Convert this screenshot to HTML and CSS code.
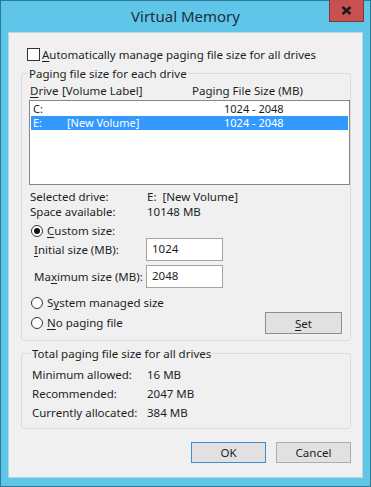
FILE: index.html
```html
<!DOCTYPE html>
<html lang="en">
<head>
    <meta charset="UTF-8">
    <title>Virtual Memory</title>
    <link rel="stylesheet" href="styles.css">
</head>
<body>
    <div class="window">
        <div class="titlebar">
            <span></span>
            <span class="title">Virtual Memory</span>
            <button class="close-btn" aria-label="Close">
                <svg width="11" height="9" viewBox="0 0 11 9">
                    <path d="M1.5 1 L9.5 8 M9.5 1 L1.5 8" stroke="#1b1b1b" stroke-width="2.4" fill="none"/>
                </svg>
            </button>
        </div>

        <div class="content">
            <label class="check-row">
                <span class="checkbox"></span>
                <span><u>A</u>utomatically manage paging file size for all drives</span>
            </label>

            <fieldset class="group group-drives">
                <legend>Paging file size for each drive</legend>

                <div class="list-header">
                    <span class="col-drive"><u>D</u>rive</span>
                    <span class="col-label">[Volume Label]</span>
                    <span class="col-size">Paging File Size (MB)</span>
                </div>

                <div class="listbox">
                    <div class="list-row">
                        <span class="cell-drive">C:</span>
                        <span class="cell-label"></span>
                        <span class="cell-size">1024 - 2048</span>
                    </div>
                    <div class="list-row selected">
                        <span class="cell-drive">E:</span>
                        <span class="cell-label">[New Volume]</span>
                        <span class="cell-size">1024 - 2048</span>
                    </div>
                </div>

                <div class="info-row first">
                    <span class="info-label">Selected drive:</span>
                    <span class="info-value">E:&nbsp;&nbsp;[New Volume]</span>
                </div>
                <div class="info-row">
                    <span class="info-label">Space available:</span>
                    <span class="info-value">10148 MB</span>
                </div>

                <label class="radio-row custom">
                    <span class="radio checked"></span>
                    <span><u>C</u>ustom size:</span>
                </label>

                <div class="size-row">
                    <span class="size-label"><u>I</u>nitial size (MB):</span>
                    <span class="textbox">1024</span>
                </div>
                <div class="size-row second">
                    <span class="size-label">Ma<u>x</u>imum size (MB):</span>
                    <span class="textbox">2048</span>
                </div>

                <label class="radio-row system">
                    <span class="radio"></span>
                    <span>S<u>y</u>stem managed size</span>
                </label>

                <div class="set-row">
                    <label class="radio-row">
                        <span class="radio"></span>
                        <span><u>N</u>o paging file</span>
                    </label>
                    <button class="btn btn-set"><u>S</u>et</button>
                </div>
            </fieldset>

            <fieldset class="group group-total">
                <legend>Total paging file size for all drives</legend>
                <div class="total-row">
                    <span class="total-label">Minimum allowed:</span>
                    <span>16 MB</span>
                </div>
                <div class="total-row">
                    <span class="total-label">Recommended:</span>
                    <span>2047 MB</span>
                </div>
                <div class="total-row">
                    <span class="total-label">Currently allocated:</span>
                    <span>384 MB</span>
                </div>
            </fieldset>

            <div class="dialog-buttons">
                <button class="btn btn-default">OK</button>
                <button class="btn">Cancel</button>
            </div>
        </div>
    </div>
</body>
</html>
```

FILE: styles.css
```css
html, body {
    margin: 0;
    padding: 0;
}
body {
    font-family: "Noto Sans", "Open Sans", sans-serif;
    font-size: 11.5px;
    color: #1e1e1e;
}
u {
    text-decoration-thickness: 1px;
    text-underline-offset: 2px;
}
.window {
    width: 371px;
    height: 487px;
    box-sizing: border-box;
    background-color: #5fc6ea;
    border: 1px solid #2b7c99;
    padding: 0 7px 8px 7px;
    display: flex;
    flex-direction: column;
}
.titlebar {
    height: 31px;
    display: grid;
    grid-template-columns: 1fr auto 1fr;
    align-items: start;
}
.title {
    font-size: 15px;
    line-height: 31px;
    color: #1c2f3c;
}
.close-btn {
    justify-self: end;
    width: 35px;
    height: 22px;
    margin-top: -1px;
    margin-right: -1px;
    padding: 0;
    background-color: #c75050;
    border: 1px solid #7d3b3b;
    border-top: none;
    display: flex;
    align-items: center;
    justify-content: center;
}
.content {
    flex: 1;
    background-color: #f0f0f0;
    border: 1px solid #b9d6e2;
    padding: 14px 11px 0 12px;
    display: flex;
    flex-direction: column;
}

/* checkbox + radio */
.check-row {
    display: flex;
    align-items: center;
    height: 15px;
    line-height: 15px;
    margin-left: 6px;
}
.checkbox {
    width: 11px;
    height: 11px;
    border: 1px solid #333;
    background-color: #fff;
    margin-right: 2px;
}
.radio-row {
    display: flex;
    align-items: center;
    height: 14px;
    line-height: 14px;
}
.radio {
    width: 10px;
    height: 10px;
    border: 1px solid #333;
    border-radius: 50%;
    background-color: #fff;
    margin-right: 4px;
    position: relative;
}
.radio.checked::after {
    content: "";
    position: absolute;
    left: 2px;
    top: 2px;
    width: 6px;
    height: 6px;
    border-radius: 50%;
    background-color: #111;
}

/* group boxes */
.group {
    margin: 4px 0 0 0;
    border: 1px solid #dcdcdc;
    border-radius: 3px;
    padding: 0 0 6px 7px;
    min-width: 0;
}
.group legend {
    padding: 0 1px;
    margin-left: -1px;
    line-height: 15px;
}
.list-header {
    display: flex;
    line-height: 15px;
    margin-top: 2px;
    padding-left: 1px;
}
.col-drive { width: 32px; }
.col-label { width: 130px; }
.listbox {
    margin-top: 2px;
    height: 85px;
    box-sizing: border-box;
    border: 1px solid #828790;
    background-color: #fff;
    padding: 1px;
}
.list-row {
    display: flex;
    height: 14px;
    line-height: 14px;
    font-size: 11px;
    padding-left: 2px;
}
.list-row.selected {
    background-color: #3399ff;
    color: #fff;
}
.cell-drive { width: 34px; }
.cell-label { width: 157px; }
.info-row {
    display: flex;
    line-height: 15px;
    padding-left: 1px;
}
.info-row.first {
    margin-top: 4px;
}
.info-label { width: 117px; }
.radio-row.custom {
    margin-top: 5px;
    padding-left: 2px;
}
.size-row {
    display: flex;
    align-items: center;
    margin-top: 0;
    padding-left: 5px;
}
.size-row.second {
    margin-top: 4px;
}
.size-label {
    width: 112px;
}
.textbox {
    width: 77px;
    height: 23px;
    box-sizing: border-box;
    border: 1px solid #a3a3a3;
    background-color: #fff;
    padding: 2px 0 0 5px;
}
.radio-row.system {
    margin-top: 8px;
    padding-left: 2px;
}
.set-row {
    display: flex;
    align-items: center;
    justify-content: space-between;
    margin-top: 2px;
    padding-left: 2px;
    padding-right: 8px;
}

/* buttons */
.btn {
    font-family: inherit;
    font-size: 11.5px;
    color: #1e1e1e;
    width: 75px;
    height: 21px;
    padding: 0;
    background-color: #e1e1e1;
    border: 1px solid #adadad;
}
.btn-set {
    width: 77px;
    height: 22px;
    border-color: #8e8e8e;
}
.btn-default {
    border-color: #3c8fd6;
}
.group-total {
    margin-top: 5px;
    padding: 0 0 6px 10px;
}
.total-row {
    display: flex;
    line-height: 19px;
}
.total-row:first-of-type {
    margin-top: 4px;
}
.total-label {
    width: 115px;
}
.dialog-buttons {
    display: flex;
    justify-content: flex-end;
    gap: 10px;
    margin-top: 13px;
}
```
